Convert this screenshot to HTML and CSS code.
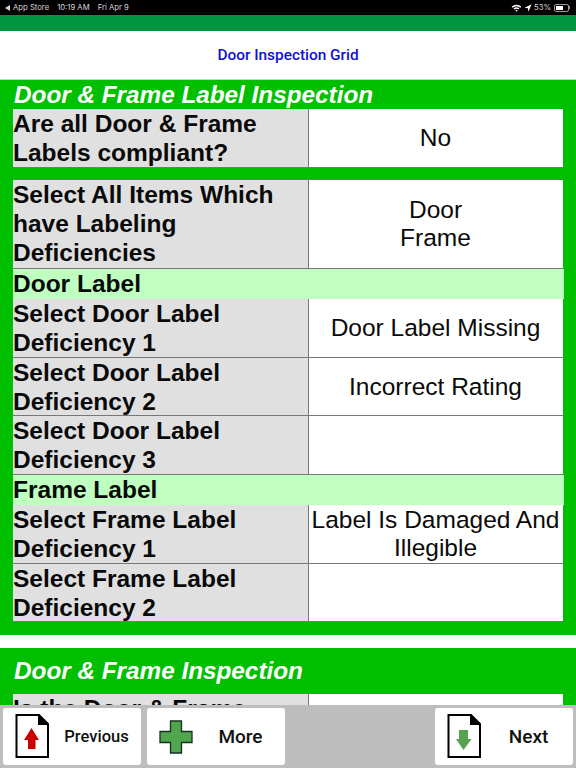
FILE: index.html
```html
<!DOCTYPE html>
<html lang="en">
<head>
    <meta charset="UTF-8">
    <meta name="viewport" content="width=device-width, initial-scale=1.0">
    <title>Door Inspection Grid</title>
    <link rel="stylesheet" href="styles.css">
</head>
<body>
    <div class="status-bar">
        <div class="status-left">
            <span class="back-arrow"></span>
            <span>App Store</span>
            <span class="status-time">10:19 AM</span>
            <span class="status-date">Fri Apr 9</span>
        </div>
        <div class="status-right">
            <svg class="wifi" viewBox="0 0 12 9" width="11" height="8">
                <path d="M0.5 3 A8 8 0 0 1 11.5 3 L10.3 4.2 A6.3 6.3 0 0 0 1.7 4.2 Z" fill="#fff"/>
                <path d="M2.7 5.1 A5 5 0 0 1 9.3 5.1 L8.2 6.2 A3.4 3.4 0 0 0 3.8 6.2 Z" fill="#fff"/>
                <path d="M4.7 7.1 A2 2 0 0 1 7.3 7.1 L6 8.6 Z" fill="#fff"/>
            </svg>
            <svg class="location" viewBox="0 0 9 9" width="8" height="8">
                <path d="M8.6 0.4 L0.6 4.2 L4.4 4.7 L4.9 8.6 Z" fill="#fff"/>
            </svg>
            <span>53%</span>
            <span class="battery"><span class="battery-fill"></span></span>
            <span class="battery-tip"></span>
        </div>
    </div>
    <div class="green-bar"></div>
    <div class="nav-bar">Door Inspection Grid</div>

    <div class="content">
        <section class="section">
            <h2 class="section-title">Door &amp; Frame Label Inspection</h2>
            <div class="grid">
                <div class="label">Are all Door &amp; Frame Labels compliant?</div>
                <div class="value">No</div>
            </div>
            <div class="grid grid-gap">
                <div class="label label-tall">Select All Items Which have Labeling Deficiencies</div>
                <div class="value">Door<br>Frame</div>
                <div class="group">Door Label</div>
                <div class="label">Select Door Label Deficiency 1</div>
                <div class="value">Door Label Missing</div>
                <div class="label">Select Door Label Deficiency 2</div>
                <div class="value">Incorrect Rating</div>
                <div class="label">Select Door Label Deficiency 3</div>
                <div class="value"></div>
                <div class="group">Frame Label</div>
                <div class="label">Select Frame Label Deficiency 1</div>
                <div class="value">Label Is Damaged And Illegible</div>
                <div class="label">Select Frame Label Deficiency 2</div>
                <div class="value"></div>
            </div>
        </section>
        <section class="section section-next">
            <h2 class="section-title">Door &amp; Frame Inspection</h2>
            <div class="grid">
                <div class="label">Is the Door &amp; Frame</div>
                <div class="value"></div>
            </div>
        </section>
    </div>

    <div class="toolbar">
        <button class="tool-btn btn-prev">
            <svg viewBox="0 0 34 45" width="34" height="45">
                <path d="M1.5 1 H24 L33 10 V43 H1.5 Z" fill="#fff" stroke="#000" stroke-width="2"/>
                <path d="M23 0.5 L33.5 11 H23 Z" fill="#000"/>
                <path d="M16.5 14 L24 26 H20.5 V35 H13 V26 H9 Z" fill="#cc0000"/>
            </svg>
            <span class="tool-text">Previous</span>
        </button>
        <button class="tool-btn btn-more">
            <svg viewBox="0 0 34 34" width="34" height="34">
                <path d="M11.5 1 H22.5 V11.5 H33 V22.5 H22.5 V33 H11.5 V22.5 H1 V11.5 H11.5 Z" fill="#4fa64f" stroke="#14301a" stroke-width="1.3"/>
            </svg>
            <span class="tool-text tool-text-big">More</span>
        </button>
        <button class="tool-btn btn-next">
            <svg viewBox="0 0 34 45" width="34" height="45">
                <path d="M1.5 1 H24 L33 10 V43 H1.5 Z" fill="#fff" stroke="#000" stroke-width="2"/>
                <path d="M23 0.5 L33.5 11 H23 Z" fill="#000"/>
                <path d="M12 16 H21 V25 H24.5 L16.5 36 L9 25 H12 Z" fill="#55a350"/>
            </svg>
            <span class="tool-text tool-text-big">Next</span>
        </button>
    </div>
</body>
</html>
```

FILE: styles.css
```css
html, body {
    margin: 0;
    height: 100%;
}
body {
    width: 576px;
    height: 768px;
    overflow: hidden;
    display: flex;
    flex-direction: column;
    font-family: "Liberation Sans", Arial, sans-serif;
    background-color: #fff;
}

/* Status bar */
.status-bar {
    height: 15px;
    flex: none;
    background-color: #000;
    color: #d8d8d8;
    font-family: "Inter", "Liberation Sans", sans-serif;
    font-size: 7.7px;
    display: flex;
    justify-content: space-between;
    align-items: center;
    padding: 0 6px 0 5px;
}
.status-left, .status-right {
    display: flex;
    align-items: center;
}
.back-arrow {
    width: 0;
    height: 0;
    border-top: 3px solid transparent;
    border-bottom: 3px solid transparent;
    border-right: 5px solid #d8d8d8;
    margin-right: 3px;
}
.status-time {
    margin-left: 8px;
}
.status-date {
    margin-left: 8px;
}
.status-right svg {
    margin-right: 2px;
}
.battery {
    width: 15px;
    height: 8px;
    margin-left: 3px;
    border: 1px solid #999;
    border-radius: 2px;
    display: flex;
    padding: 1px;
    box-sizing: border-box;
}
.battery-fill {
    width: 60%;
    background-color: #fff;
}
.battery-tip {
    width: 1px;
    height: 3px;
    background-color: #999;
}
.green-bar {
    height: 16px;
    flex: none;
    background-color: #009542;
}
.nav-bar {
    height: 49px;
    flex: none;
    box-sizing: border-box;
    border-bottom: 1px solid #c4d4c4;
    display: flex;
    align-items: center;
    justify-content: center;
    background-color: #fff;
    color: #1111d4;
    font-family: "Roboto", "Liberation Sans", sans-serif;
    font-size: 15.4px;
    font-weight: 500;
}

/* Inspection sections */
.content {
    flex: 1;
    min-height: 0;
    overflow: hidden;
    background-color: #fff;
}
.section {
    background-color: #00bf00;
    padding: 0 13px 13px 13px;
}
.section-next {
    margin-top: 13px;
}
.section-title {
    margin: 0;
    height: 29px;
    line-height: 29px;
    color: #fff;
    font-size: 24.3px;
    font-style: italic;
    font-weight: bold;
    padding-left: 1px;
}
.section-next .section-title {
    height: 46px;
    line-height: 46px;
}
.grid {
    display: grid;
    grid-template-columns: 296px 254px;
    background-color: #fff;
}
.grid-gap {
    margin-top: 12.5px;
}
.label {
    box-sizing: border-box;
    height: 58.5px;
    background-color: #e0e0e0;
    border-bottom: 1px solid #777;
    border-right: 1px solid #777;
    font-size: 24.5px;
    font-weight: bold;
    line-height: 29px;
    color: #0a0a0a;
}
.label-tall {
    height: 88.5px;
}
.value {
    border-bottom: 1px solid #777;
    padding: 1px 1px 0 0;
    font-size: 24.5px;
    line-height: 28.25px;
    color: #0a0a0a;
    display: flex;
    align-items: center;
    justify-content: center;
    text-align: center;
}
.group {
    grid-column: 1 / 3;
    background-color: #bfffbf;
    font-size: 24.5px;
    font-weight: bold;
    line-height: 30.5px;
    color: #0a0a0a;
    width: 551px;
}

/* Bottom toolbar */
.toolbar {
    height: 63px;
    flex: none;
    box-sizing: border-box;
    background-color: #bdbdbd;
    padding: 3px;
    display: flex;
    gap: 6px;
}
.tool-btn {
    width: 138px;
    height: 57px;
    border: 0;
    border-radius: 3px;
    background-color: #fff;
    color: #111;
    display: flex;
    align-items: center;
    padding: 0 0 0 12px;
    font-family: "Roboto", "Liberation Sans", sans-serif;
}
.btn-next {
    margin-left: auto;
}
.tool-text {
    flex: 1;
    text-align: center;
    font-size: 16.5px;
    font-weight: 500;
    padding-left: 3px;
}
.tool-text-big {
    font-size: 19px;
}
```
